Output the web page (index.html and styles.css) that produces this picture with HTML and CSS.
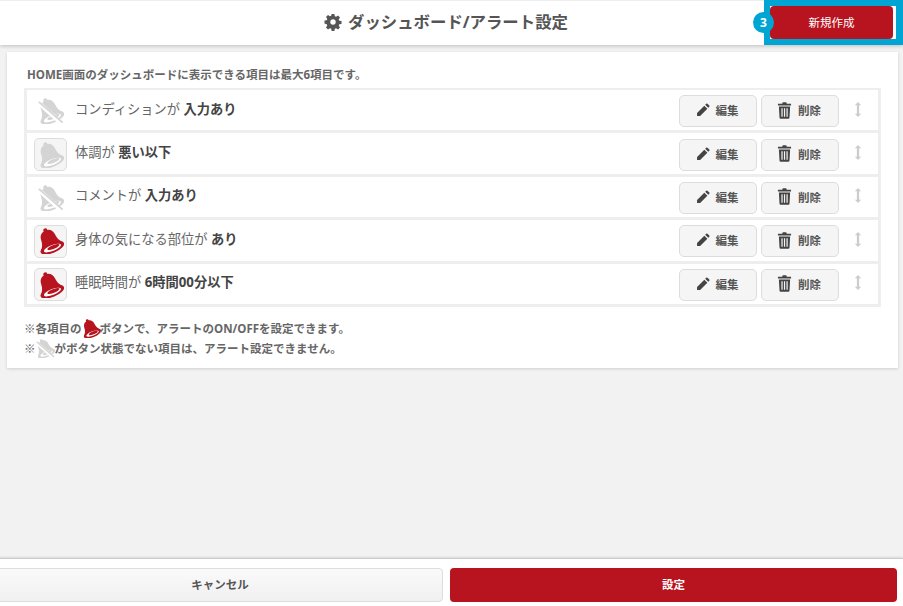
FILE: index.html
```html
<!DOCTYPE html>
<html lang="ja">
<head>
<meta charset="utf-8">
<title>ダッシュボード/アラート設定</title>
<link rel="stylesheet" href="styles.css">
</head>
<body>
<svg class="defs" width="0" height="0" aria-hidden="true">
  <defs>
    <symbol id="bell" viewBox="3 2 30 30">
      <g transform="rotate(-22 16 16)">
        <circle cx="16" cy="3.800" r="2.300"/>
        <path d="M16 4c-5.200 0-8.300 3.600-8.600 8.300C7 18 5.500 20.500 2 24.500h28c-3.500-4-5-6.500-5.400-12.200C24.300 7.600 21.200 4 16 4z"/>
        <ellipse cx="16" cy="25.500" rx="14.500" ry="6"/>
        <ellipse cx="16" cy="25.800" rx="10.500" ry="3.400" fill="#fff"/>
        <ellipse cx="17.500" cy="25.200" rx="7.500" ry="2.200"/>
      </g>
    </symbol>
    <symbol id="bell-off" viewBox="0 0 30 30">
      <use href="#bell" width="30" height="30"/>
      <path d="M1 6l27 24" stroke="#fff" stroke-width="5"/>
      <path d="M1 4.500l27.500 24" stroke="currentColor" stroke-width="2"/>
    </symbol>
    <symbol id="pencil" viewBox="0 0 16 16">
      <path d="M1.200 11.300l8.300-8.300 3.500 3.500-8.300 8.300H1.200zM10.500 2l1.200-1.200a1 1 0 0 1 1.400 0l2.100 2.100a1 1 0 0 1 0 1.400L14 5.500z"/>
    </symbol>
    <symbol id="trash" viewBox="0 0 16 18">
      <path d="M5.500 1.700 6.200.3h3.600l.7 1.400H15v2H1v-2zM2 4.700h12l-.7 12a1.200 1.200 0 0 1-1.200 1.100H3.900a1.200 1.200 0 0 1-1.200-1.100zm2.700 2v9h1.300v-9zm2.700 0v9h1.300v-9zm2.700 0v9h1.300v-9z" fill-rule="evenodd"/>
    </symbol>
    <symbol id="updown" viewBox="0 0 8 16">
      <path d="M4 0l3.400 3.500H5.200v9h2.200L4 16 .6 12.500h2.200v-9H.6z"/>
    </symbol>
  </defs>
</svg>

<div class="page">
  <header class="header">
    <span></span>
    <h1 class="title">
      <svg class="gear" viewBox="0 0 16 16"><path fill-rule="evenodd" d="M6.600 0h2.800l.4 2.200 1.300.6 1.900-1.300 2 2-1.300 1.900.6 1.300 2.200.4v2.800l-2.200.4-.6 1.300 1.300 1.900-2 2-1.900-1.300-1.300.6-.4 2.200H6.600l-.4-2.200-1.300-.6-1.900 1.300-2-2 1.300-1.900-.6-1.300L-.5 9.400V6.600l2.200-.4.600-1.300L1 3l2-2 1.900 1.300 1.300-.6zM8 5.300a2.700 2.700 0 1 0 0 5.400 2.700 2.700 0 0 0 0-5.400z"/></svg>
      ダッシュボード/アラート設定
    </h1>
    <div class="new-wrap"><button class="new-btn">新規作成</button></div>
  </header>

  <main class="main">
    <section class="card">
      <p class="lead">HOME画面のダッシュボードに表示できる項目は最大6項目です。</p>
      <ul class="list">
        <li class="row">
          <span class="toggle plain off"><svg class="bell"><use href="#bell-off"/></svg></span>
          <span class="cond">コンディションが <b>入力あり</b></span>
          <button class="act"><svg class="ic-pencil"><use href="#pencil"/></svg>編集</button>
          <button class="act"><svg class="ic-trash"><use href="#trash"/></svg>削除</button>
          <svg class="sort"><use href="#updown"/></svg>
        </li>
        <li class="row">
          <span class="toggle off"><svg class="bell"><use href="#bell"/></svg></span>
          <span class="cond">体調が <b>悪い以下</b></span>
          <button class="act"><svg class="ic-pencil"><use href="#pencil"/></svg>編集</button>
          <button class="act"><svg class="ic-trash"><use href="#trash"/></svg>削除</button>
          <svg class="sort"><use href="#updown"/></svg>
        </li>
        <li class="row">
          <span class="toggle plain off"><svg class="bell"><use href="#bell-off"/></svg></span>
          <span class="cond">コメントが <b>入力あり</b></span>
          <button class="act"><svg class="ic-pencil"><use href="#pencil"/></svg>編集</button>
          <button class="act"><svg class="ic-trash"><use href="#trash"/></svg>削除</button>
          <svg class="sort"><use href="#updown"/></svg>
        </li>
        <li class="row">
          <span class="toggle on"><svg class="bell"><use href="#bell"/></svg></span>
          <span class="cond">身体の気になる部位が <b>あり</b></span>
          <button class="act"><svg class="ic-pencil"><use href="#pencil"/></svg>編集</button>
          <button class="act"><svg class="ic-trash"><use href="#trash"/></svg>削除</button>
          <svg class="sort"><use href="#updown"/></svg>
        </li>
        <li class="row">
          <span class="toggle on"><svg class="bell"><use href="#bell"/></svg></span>
          <span class="cond">睡眠時間が <b>6時間00分以下</b></span>
          <button class="act"><svg class="ic-pencil"><use href="#pencil"/></svg>編集</button>
          <button class="act"><svg class="ic-trash"><use href="#trash"/></svg>削除</button>
          <svg class="sort"><use href="#updown"/></svg>
        </li>
      </ul>
      <div class="notes">
        <p>※各項目の<svg class="bell-inline on"><use href="#bell"/></svg>ボタンで、アラートのON/OFFを設定できます。</p>
        <p>※<svg class="bell-inline off"><use href="#bell-off"/></svg>がボタン状態でない項目は、アラート設定できません。</p>
      </div>
    </section>
  </main>

  <footer class="footer">
    <button class="foot-btn cancel">キャンセル</button>
    <button class="foot-btn submit">設定</button>
  </footer>
</div>
</body>
</html>
```

FILE: styles.css
```css
* { box-sizing: border-box; }
html, body { margin: 0; height: 100%; }
body {
  background: #f2f2f2;
  color: #555;
  font-family: "Open Sans", "Noto Sans CJK JP", sans-serif;
  overflow: hidden;
}
button { font-family: inherit; cursor: pointer; }
.defs { position: absolute; }
.page { height: 606px; display: flex; flex-direction: column; }

.header {
  flex: none;
  height: 45px;
  background: #fff;
  border-top: 1px solid #eee;
  box-shadow: 0 1px 4px rgba(0, 0, 0, .22);
  display: grid;
  grid-template-columns: 1fr auto 1fr;
  align-items: center;
  position: relative;
  z-index: 2;
}
.title {
  margin: 0 10px 4px 0;
  font-size: 16.400px;
  font-weight: 700;
  color: #555;
  display: flex;
  align-items: center;
  gap: 7px;
  white-space: nowrap;
}
.gear { width: 16px; height: 16px; fill: #555; overflow: visible; margin-top: 2px; }
.new-wrap {
  justify-self: end;
  width: 139px;
  height: 45px;
  margin-top: -1px;
  border: 6px solid #00a5d4;
  border-right-width: 7px;
  padding-right: 3px;
  background: #fff;
  position: relative;
}
.new-wrap::before {
  content: "3";
  position: absolute;
  left: -17px;
  top: 6px;
  width: 21px;
  height: 21px;
  border-radius: 50%;
  background: #00a5d4;
  color: #fff;
  font-size: 12px;
  font-weight: 700;
  line-height: 21px;
  text-align: center;
}
.new-btn {
  display: block;
  width: 100%;
  height: 100%;
  border: 0;
  border-radius: 4px;
  background: #b7141f;
  color: #fff;
  font-size: 11.500px;
  padding: 0 0 2px;
}

.main { flex: 1; min-height: 0; padding: 7px 5px 0 7px; }
.card {
  background: #fff;
  padding: 15px 17px 0;
  height: 316px;
  box-shadow: 0 1px 3px rgba(0, 0, 0, .15);
}
.lead {
  margin: 0 0 6px 3px;
  font-size: 11.500px;
  font-weight: 700;
  line-height: 15px;
  color: #666;
}
.list {
  list-style: none;
  margin: 0;
  padding: 0;
  border: 2px solid #eee;
  border-width: 2px 3px 0;
}
.row {
  height: 43.400px;
  border-bottom: 3px solid #eee;
  padding: 2px 0 0 7px;
  display: flex;
  align-items: center;
}
.toggle {
  flex: none;
  width: 33px;
  height: 33px;
  border: 1px solid #ddd;
  border-radius: 5px;
  background: #f5f5f5;
  display: flex;
  align-items: center;
  justify-content: center;
}
.toggle.plain { border-color: transparent; background: transparent; }
.bell { width: 26px; height: 26px; }
.off { color: #d4d4d4; fill: #d4d4d4; }
.on { color: #b7141f; fill: #b7141f; }
.cond {
  flex: 1;
  margin-left: 8px;
  font-size: 13.250px;
  color: #666;
  white-space: pre-wrap;
  padding-bottom: 6px;
}
.cond b { color: #444; font-weight: 700; }
.act {
  flex: none;
  width: 78px;
  height: 32px;
  margin-right: 4px;
  border: 1px solid #ddd;
  border-radius: 5px;
  background: #f5f5f5;
  color: #555;
  font-size: 11.500px;
  font-weight: 700;
  display: flex;
  align-items: center;
  justify-content: center;
  gap: 6px;
  padding: 0 2px 2px 0;
}
.ic-pencil { width: 14px; height: 14px; fill: #444; }
.ic-trash { width: 15px; height: 17px; fill: #444; }
.sort { flex: none; width: 8px; height: 15px; margin: 0 16px 4px 11px; fill: #ccc; }
.notes { margin: 12px 0 0; }
.notes p {
  margin: 0;
  font-size: 11.500px;
  font-weight: 700;
  line-height: 20px;
  color: #666;
  display: flex;
  align-items: center;
  height: 20px;
}
.bell-inline { width: 19px; height: 19px; flex: none; }
.bell-inline.on { margin-right: -1px; }

.footer {
  flex: none;
  height: 48px;
  background: #fff;
  border-top: 1px solid #ccc;
  box-shadow: 0 -1px 2px rgba(0, 0, 0, .1);
  padding: 9px 6px 0 0;
  margin-left: -3px;
  display: grid;
  grid-template-columns: 446px 1fr;
  column-gap: 7px;
  align-items: start;
}
.foot-btn {
  height: 34px;
  border-radius: 4px;
  font-size: 11.500px;
  font-weight: 700;
  padding: 0 0 2px;
}
.cancel {
  border: 1px solid #ddd;
  background: linear-gradient(#fafafa, #f0f0f0);
  color: #555;
}
.submit { border: 0; background: #b7141f; color: #fff; }
```
